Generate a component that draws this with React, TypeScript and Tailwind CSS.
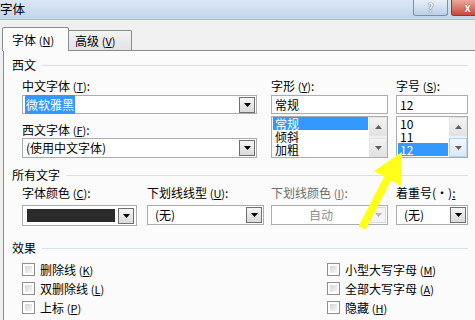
import React from 'react';

const Mn = ({ c }: { c: string }) => (
  <span className="text-[11px]">
    (<span className="underline">{c}</span>)
  </span>
);

function Tri({ color = '#000' }: { color?: string }) {
  return (
    <svg width="7" height="4" viewBox="0 0 7 4">
      <polygon points="0,0 7,0 3.5,4" fill={color} />
    </svg>
  );
}

function DropBtn({ disabled }: { disabled?: boolean }) {
  return (
    <div
      className={
        disabled
          ? 'w-[16px] h-[16px] flex items-center justify-center border border-[#d9d9d9] bg-[#f4f4f4]'
          : 'w-[16px] h-[16px] flex items-center justify-center border border-[#707070] bg-gradient-to-b from-[#f6f6f6] to-[#dadada]'
      }
    >
      <Tri color={disabled ? '#b8b8b8' : '#000'} />
    </div>
  );
}

function Combo({
  w,
  children,
  disabled,
  center,
}: {
  w: string;
  children?: React.ReactNode;
  disabled?: boolean;
  center?: boolean;
}) {
  return (
    <div className={`${w} h-[20px] border border-[#acacac] bg-white flex items-center pr-[1px]`}>
      <div
        className={`flex-1 min-w-0 leading-[14px] ${center ? 'text-center' : 'pl-[3px]'} ${
          disabled ? 'text-[#8d8d8d]' : 'text-black'
        }`}
      >
        {children}
      </div>
      <DropBtn disabled={disabled} />
    </div>
  );
}

function Input({ w, children }: { w: string; children?: React.ReactNode }) {
  return (
    <div className={`${w} h-[19px] border border-[#acacac] bg-white flex items-center pl-[3px] leading-[14px]`}>
      {children}
    </div>
  );
}

function ScrollBtn({ up, hover }: { up?: boolean; hover?: boolean }) {
  return (
    <div
      className={
        hover
          ? 'h-[19px] flex items-center justify-center border border-[#b9d4ea] bg-gradient-to-b from-[#f4f8fc] to-[#dde8f3]'
          : 'h-[19px] flex items-center justify-center border border-[#e4e4e4] bg-gradient-to-b from-[#f3f3f3] to-[#e2e2e2]'
      }
    >
      <svg width="7" height="4" viewBox="0 0 7 4">
        <polygon points={up ? '0,4 7,4 3.5,0' : '0,0 7,0 3.5,4'} fill="#5f5f5f" />
      </svg>
    </div>
  );
}

function ListBox({
  w,
  items,
  sel,
  hoverDown,
}: {
  w: string;
  items: string[];
  sel: number;
  hoverDown?: boolean;
}) {
  return (
    <div className={`${w} h-[42px] mt-[2px] border border-[#acacac] bg-white flex`}>
      <div className="flex-1 pt-[0px] pl-[1px] pr-[1px]">
        {items.map((it, i) => (
          <div
            key={it}
            className={`h-[13px] leading-[13px] pl-[2px] ${i === sel ? 'bg-[#3399ff] text-white' : 'text-black'}`}
          >
            {it}
          </div>
        ))}
      </div>
      <div className="w-[18px] flex flex-col justify-between bg-[#efefef]">
        <ScrollBtn up />
        <ScrollBtn hover={hoverDown} />
      </div>
    </div>
  );
}

function Header({ children }: { children: React.ReactNode }) {
  return (
    <div className="h-[14px] flex items-center pr-[7px]">
      <span className="leading-[14px] text-black">{children}</span>
      <div className="flex-1 h-px bg-[#d8e1ea] ml-[6px]" />
    </div>
  );
}

function Check({ children }: { children: React.ReactNode }) {
  return (
    <div className="h-[19px] flex items-center">
      <div className="w-[13px] h-[13px] border border-[#8e8f8f] bg-white p-[2px]">
        <div className="w-full h-full bg-gradient-to-br from-[#d6d6d6] to-[#f6f6f6]" />
      </div>
      <span className="ml-[5px] leading-[14px]">{children}</span>
    </div>
  );
}

export default function App() {
  return (
    <div className="w-[475px] h-[320px] overflow-hidden relative bg-[#f0f0f0] text-[12px] text-black font-['Noto_Sans_CJK_SC','Noto_Sans',sans-serif] flex flex-col">
      {/* Title bar */}
      <div className="h-[20px] shrink-0 flex items-start bg-gradient-to-b from-[#dbe7f5] to-[#c2d5ea] border-b border-[#a9bdd6]">
        <span className="leading-[15px] mt-[1px] text-[12.5px]">字体</span>
        <div className="flex-1" />
        <div className="w-[35px] h-[16px] border border-t-0 border-[#7b8fa9] rounded-b-[3px] bg-gradient-to-b from-[#e8f0f9] to-[#bccfe6] flex items-center justify-center">
          <span className="text-[11px] leading-[11px] font-bold text-white [text-shadow:0_0_1px_#44556b,0_0_1px_#44556b]">?</span>
        </div>
        <div className="w-[24px] h-[16px] ml-[3px] border border-t-0 border-r-0 border-[#8a3b30] rounded-bl-[3px] bg-gradient-to-b from-[#e9a99c] to-[#c8473a] flex items-center justify-center pl-[8px]">
          <span className="text-[11px] leading-[11px] font-bold text-white [text-shadow:0_0_1px_#6a2018]">x</span>
        </div>
      </div>

      {/* Tabs */}
      <div className="h-[30px] shrink-0 flex items-end pl-[2px] relative z-10">
        <div className="w-[67px] h-[24px] -mb-[1px] border border-b-0 border-[#898c95] rounded-t-[2px] bg-[#fbfbfb] flex items-start pt-[5px] pl-[9px]">
          <span className="leading-[14px]">
            字体 <Mn c="N" />
          </span>
        </div>
        <div className="w-[63px] h-[20px] border border-l-0 border-b-0 border-[#898c95] rounded-tr-[2px] bg-gradient-to-b from-[#f3f3f3] to-[#e3e3e3] flex items-start pt-[3px] pl-[6px]">
          <span className="leading-[14px]">
            高级 <Mn c="V" />
          </span>
        </div>
      </div>

      {/* Panel */}
      <div className="flex-1 ml-[3px] border-l border-t border-[#898c95] bg-[#fbfbfb] pl-[8px] pt-[7px]">
        <Header>西文</Header>

        <div className="flex ml-[10px] mt-[6px]">
          <div className="w-[235px] flex flex-col">
            <div className="h-[16px] leading-[16px]">
              中文字体 <Mn c="T" />:
            </div>
            <div className="mt-[1px]">
              <div className="w-[235px] h-[19px] border border-[#acacac] bg-white flex items-center pr-[1px]">
                <div className="flex-1 pl-[2px] leading-[14px]">
                  <span className="bg-[#3399ff] text-white px-[1px] py-[1px]">微软雅黑</span>
                </div>
                <DropBtn />
              </div>
            </div>
            <div className="h-[16px] leading-[16px] mt-[8px]">
              西文字体 <Mn c="F" />:
            </div>
            <Combo w="w-[235px]">(使用中文字体)</Combo>
          </div>

          <div className="w-[117px] ml-[14px] flex flex-col">
            <div className="h-[16px] leading-[16px]">
              字形 <Mn c="Y" />:
            </div>
            <div className="mt-[1px]">
              <Input w="w-[117px]">常规</Input>
            </div>
            <ListBox w="w-[117px]" items={['常规', '倾斜', '加粗']} sel={0} />
          </div>

          <div className="w-[72px] ml-[8px] flex flex-col">
            <div className="h-[16px] leading-[16px]">
              字号 <Mn c="S" />:
            </div>
            <div className="mt-[1px]">
              <Input w="w-[72px]">12</Input>
            </div>
            <ListBox w="w-[72px]" items={['10', '11', '12']} sel={2} hoverDown />
          </div>
        </div>

        <div className="mt-[10px]">
          <Header>所有文字</Header>
        </div>

        <div className="flex ml-[10px] mt-[3px]">
          <div className="w-[115px]">
            <div className="h-[16px] leading-[16px]">
              字体颜色 <Mn c="C" />:
            </div>
            <div className="mt-[4px] w-[115px] h-[21px] border border-[#acacac] bg-white flex items-center pl-[4px] pr-[2px]">
              <div className="flex-1 h-[13px] bg-[#2b2b2b] mr-[3px]" />
              <DropBtn />
            </div>
          </div>
          <div className="w-[117px] ml-[10px]">
            <div className="h-[16px] leading-[16px]">
              下划线线型 <Mn c="U" />:
            </div>
            <div className="mt-[4px]">
              <Combo w="w-[117px]">
                <span className="pl-[4px]">(无)</span>
              </Combo>
            </div>
          </div>
          <div className="w-[117px] ml-[7px]">
            <div className="h-[16px] leading-[16px] text-[#6d6d6d]">
              下划线颜色 <Mn c="I" />:
            </div>
            <div className="mt-[4px]">
              <Combo w="w-[117px]" disabled center>
                自动
              </Combo>
            </div>
          </div>
          <div className="w-[72px] ml-[8px]">
            <div className="h-[16px] leading-[16px] whitespace-nowrap">
              着重号(·)<span className="underline">:</span>
            </div>
            <div className="mt-[4px]">
              <Combo w="w-[72px]">
                <span className="pl-[4px]">(无)</span>
              </Combo>
            </div>
          </div>
        </div>

        <div className="mt-[15px]">
          <Header>效果</Header>
        </div>

        <div className="flex ml-[10px] mt-[5px]">
          <div className="w-[305px] flex flex-col">
            <Check>
              删除线 <Mn c="K" />
            </Check>
            <Check>
              双删除线 <Mn c="L" />
            </Check>
            <Check>
              上标 <Mn c="P" />
            </Check>
          </div>
          <div className="flex flex-col">
            <Check>
              小型大写字母 <Mn c="M" />
            </Check>
            <Check>
              全部大写字母 <Mn c="A" />
            </Check>
            <Check>
              隐藏 <Mn c="H" />
            </Check>
          </div>
        </div>
      </div>

      {/* Yellow annotation arrow */}
      <svg className="absolute left-0 top-0 pointer-events-none" width="475" height="320" viewBox="0 0 475 320">
        <polygon points="402,152 374,171 401,186" fill="#ffff1a" />
        <line x1="388" y1="178" x2="362" y2="228" stroke="#ffff1a" strokeWidth="8" />
      </svg>
    </div>
  );
}
